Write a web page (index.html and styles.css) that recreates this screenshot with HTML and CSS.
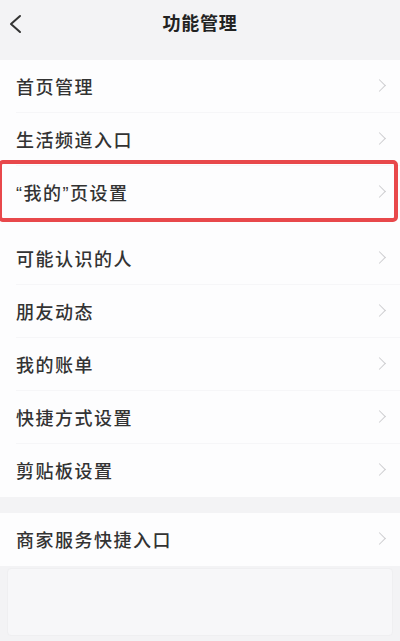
FILE: index.html
```html
<!DOCTYPE html>
<html lang="zh-CN">
<head>
<meta charset="utf-8">
<title>功能管理</title>
<link rel="stylesheet" href="styles.css">
</head>
<body>
<header class="nav">
  <svg class="back" width="16" height="22" viewBox="0 0 16 22"><path d="M12 3 L3 11 L12 19" fill="none" stroke="#333" stroke-width="2" stroke-linecap="round" stroke-linejoin="round"/></svg>
  <h1 class="title">功能管理</h1>
</header>
<section class="group">
  <div class="row"><span class="label">首页管理</span><span class="chev"></span></div>
  <div class="row"><span class="label">生活频道入口</span><span class="chev"></span></div>
  <div class="row row-highlight"><span class="label">“我的”页设置</span><span class="chev"></span><span class="mark"></span></div>
  <div class="row"><span class="label">可能认识的人</span><span class="chev"></span></div>
  <div class="row"><span class="label">朋友动态</span><span class="chev"></span></div>
  <div class="row"><span class="label">我的账单</span><span class="chev"></span></div>
  <div class="row"><span class="label">快捷方式设置</span><span class="chev"></span></div>
  <div class="row row-last"><span class="label">剪贴板设置</span><span class="chev"></span></div>
</section>
<section class="group group-second">
  <div class="row row-last"><span class="label">商家服务快捷入口</span><span class="chev"></span></div>
</section>
<div class="blank-panel"></div>
</body>
</html>
```

FILE: styles.css
```css
html, body {
  margin: 0;
  padding: 0;
}
body {
  width: 400px;
  height: 641px;
  overflow: hidden;
  background: #f3f3f5;
  font-family: "Noto Sans CJK SC", "Noto Sans", sans-serif;
  color: #333;
}
.nav {
  height: 60px;
  display: flex;
  align-items: center;
  justify-content: center;
  position: relative;
  background: #f3f3f5;
}
.back {
  position: absolute;
  left: 8px;
  top: 13px;
}
.title {
  margin: 0 0 16px 0;
  font-size: 18px;
  font-weight: 700;
  letter-spacing: 0.8px;
  color: #222;
}
.group {
  background: #fdfdfe;
  display: flex;
  flex-direction: column;
}
.group-second {
  margin-top: 16px;
}
.row {
  height: 53px;
  display: flex;
  align-items: center;
  justify-content: space-between;
  padding: 0 12px 2px 16px;
  box-sizing: border-box;
  position: relative;
}
.row::after {
  content: "";
  position: absolute;
  left: 16px;
  right: 0;
  bottom: 0;
  height: 1px;
  background: #f6f6f8;
}
.row-last::after,
.row-highlight::after {
  display: none;
}
.row-highlight {
  margin-bottom: 13px;
}
.label {
  font-family: "Liberation Sans", "Noto Sans CJK SC", sans-serif;
  font-size: 18px;
  font-weight: 500;
  letter-spacing: 1.5px;
  color: #333;
}
.chev {
  width: 8px;
  height: 8px;
  border-top: 1.5px solid #cdcdd0;
  border-right: 1.5px solid #cdcdd0;
  transform: rotate(45deg);
  margin-right: 4px;
}
.mark {
  position: absolute;
  top: -6px;
  bottom: -3px;
  left: -2px;
  right: 2px;
  border: 4px solid #e8484b;
  border-radius: 5px;
}
.blank-panel {
  margin: 2px 7px 0 7px;
  height: 66px;
  background: #f7f7f9;
  border: 1px solid #efeff1;
  border-radius: 4px;
}
```
